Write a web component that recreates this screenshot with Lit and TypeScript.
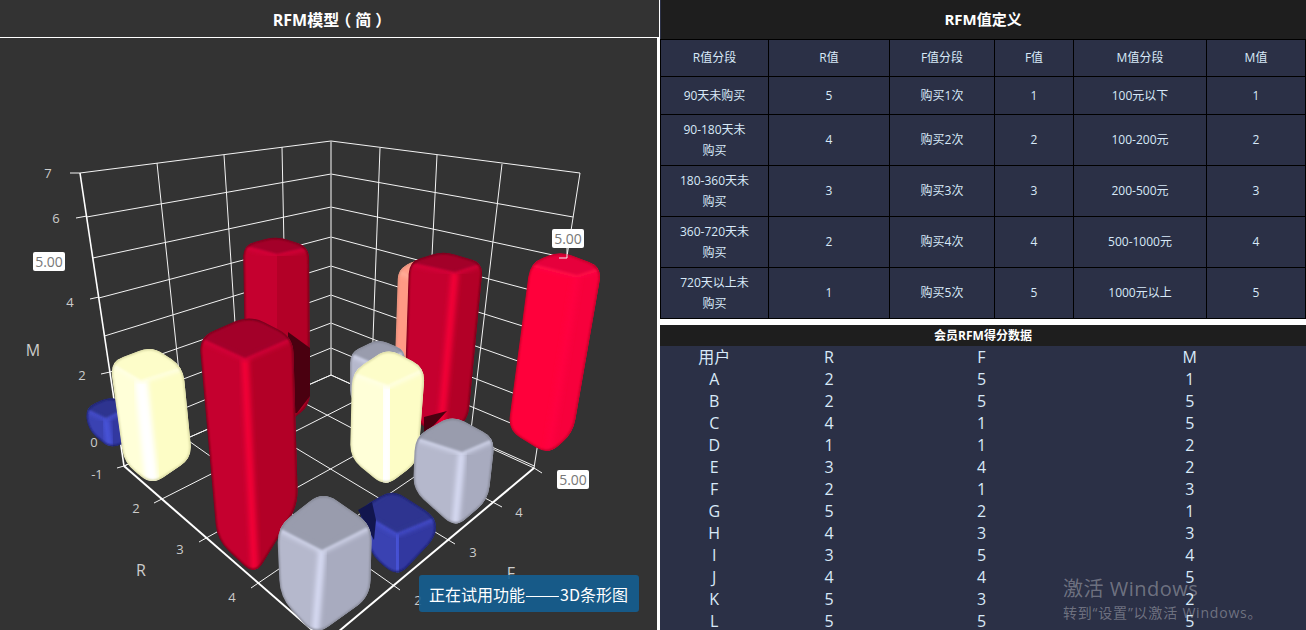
import { LitElement, html, css, svg } from "lit";
import { customElement } from "lit/decorators.js";

type P = [number, number];
interface Pal { top: string; left: string; right: string; hi: string; edge: string; bevel: string }
interface Bar { pal: Pal; L: P; T: P; R: P; F: P; BL: P; BF: P; BR: P; hw?: number; r?: number }

const RED: Pal = { top: "#a30029", left: "#c5002f", right: "#b30027", hi: "#f70039", edge: "#5f0014", bevel: "#d8003a" };
const BRIGHT: Pal = { top: "#e6003c", left: "#ff003b", right: "#f7003c", hi: "#ff0040", edge: "#b00024", bevel: "#ff0a48" };
const CREAM: Pal = { top: "#fdfdc9", left: "#ffffd8", right: "#fdfdc6", hi: "#ffffff", edge: "#d0d098", bevel: "#ffffe6" };
const GRAY: Pal = { top: "#999cad", left: "#b5b8cc", right: "#a8abbf", hi: "#d8dcf4", edge: "#7c7e8a", bevel: "#d4d8ee" };
const BLUE: Pal = { top: "#2e3490", left: "#3a42b2", right: "#3238a0", hi: "#4a55dc", edge: "#181b58", bevel: "#4650d0" };
const SALMON: Pal = { top: "#ff9f8a", left: "#ff9a85", right: "#f08c78", hi: "#ffb09c", edge: "#d88a76", bevel: "#ffb09c" };

const BARS: Bar[] = [
  { pal: BLUE, L: [85, 408], T: [110, 396], R: [132, 405], F: [106, 418], BL: [88, 430], BF: [110, 449], BR: [132, 440], r: 11 },
  { pal: RED, L: [243, 245], T: [277, 236], R: [309, 247], F: [277, 254], BL: [246, 420], BF: [277, 432], BR: [310, 405], r: 12 },
  { pal: SALMON, L: [398, 270], T: [415, 260], R: [440, 262], F: [420, 280], BL: [395, 360], BF: [415, 370], BR: [430, 360], r: 9 },
  { pal: RED, L: [409, 262], T: [443, 251], R: [483, 263], F: [455, 272], BL: [404, 410], BF: [440, 440], BR: [468, 420], r: 12 },
  { pal: GRAY, L: [350, 353], T: [378, 339], R: [405, 350], F: [378, 365], BL: [350, 400], BF: [378, 420], BR: [405, 400], r: 10 },
  { pal: BRIGHT, L: [530, 263], T: [560, 251], R: [602, 267], F: [577, 275], BL: [508, 430], BF: [548, 455], BR: [573, 433], r: 14 },
  { pal: CREAM, L: [110, 362], T: [152, 346], R: [183, 367], F: [141, 380], BL: [124, 463], BF: [152, 485], BR: [192, 458], hw: 13, r: 14 },
  { pal: RED, L: [199, 337], T: [250, 315], R: [293, 337], F: [245, 358], BL: [217, 540], BF: [255, 576], BR: [298, 505], r: 16 },
  { pal: CREAM, L: [352, 372], T: [388, 348], R: [425, 368], F: [388, 385], BL: [350, 458], BF: [385, 487], BR: [418, 462], hw: 13, r: 14 },
  { pal: GRAY, L: [415, 437], T: [452, 415], R: [495, 438], F: [462, 452], BL: [413, 490], BF: [455, 528], BR: [488, 500], r: 14 },
  { pal: BLUE, L: [358, 510], T: [392, 489], R: [436, 517], F: [397, 533], BL: [372, 557], BF: [398, 577], BR: [436, 537], r: 14 },
  { pal: GRAY, L: [277, 527], T: [323, 491], R: [372, 525], F: [322, 550], BL: [280, 597], BF: [315, 636], BR: [370, 597], r: 17 },
];

function rounded(pts: P[], r: number): string {
  const n = pts.length;
  let d = "";
  for (let i = 0; i < n; i++) {
    const p = pts[i], a = pts[(i + n - 1) % n], b = pts[(i + 1) % n];
    const la = Math.hypot(a[0] - p[0], a[1] - p[1]), lb = Math.hypot(b[0] - p[0], b[1] - p[1]);
    const ra = Math.min(r, la / 2), rb = Math.min(r, lb / 2);
    const s: P = [p[0] + (a[0] - p[0]) * ra / la, p[1] + (a[1] - p[1]) * ra / la];
    const e: P = [p[0] + (b[0] - p[0]) * rb / lb, p[1] + (b[1] - p[1]) * rb / lb];
    d += `${i ? "L" : "M"}${s[0].toFixed(1)} ${s[1].toFixed(1)}Q${p[0]} ${p[1]} ${e[0].toFixed(1)} ${e[1].toFixed(1)}`;
  }
  return d + "Z";
}
const poly = (pts: P[]) => pts.map((p) => p.join(",")).join(" ");
const line = (a: P, b: P, cls = "g") => svg`<line class=${cls} x1=${a[0]} y1=${a[1]} x2=${b[0]} y2=${b[1]}></line>`;

const LEVELS = [173, 217, 258, 298, 336, 372, 405, 435, 466];
const BACK = [141, 174, 207, 237, 266, 295, 323, 348, 375];
const lx = (y: number) => 80 + (44 * (y - 173)) / 293;
const rx = (y: number) => 580 - (46 * (y - 173)) / 295;

function grid() {
  const out: unknown[] = [];
  LEVELS.forEach((y, i) => {
    out.push(line([lx(y), y], [331, BACK[i]]));
    out.push(line([331, BACK[i]], [rx(y), y]));
  });
  const leftV: [P, P][] = [[[157, 163], [186, 439]], [[224, 155], [241, 415]], [[282, 147], [287, 394]]];
  const rightV: [P, P][] = [[[380, 148], [371, 393]], [[437, 155], [424, 417]], [[502, 164], [470, 439]]];
  [...leftV, ...rightV].forEach(([a, b]) => out.push(line(a, b)));
  out.push(line([331, 141], [331, 375], "g back"));
  out.push(line([580, 173], [534, 468]));
  out.push(line([124, 466], [331, 375]));
  out.push(line([331, 375], [534, 468]));
  const rLines: [P, P][] = [[[154, 503], [371, 393]], [[199, 542], [424, 417]], [[251, 588], [470, 439]]];
  const fLines: [P, P][] = [[[186, 439], [400, 590]], [[241, 415], [455, 544]], [[287, 394], [502, 507]]];
  [...rLines, ...fLines].forEach(([a, b]) => out.push(line(a, b)));
  out.push(line([70, 173], [80, 173]));
  out.push(line([76, 218], [87, 216]));
  out.push(line([90, 299], [99, 297]));
  out.push(line([101, 374], [110, 372]));
  out.push(line([117, 468], [124, 466]));
  out.push(line([534, 468], [542, 473]));
  out.push(line([80, 173], [124, 466], "a thin"));
  out.push(line([124, 466], [326, 642], "a"));
  out.push(line([534, 468], [326, 642], "a"));
  return out;
}

function bar(b: Bar, i: number) {
  const sil: P[] = [b.L, b.T, b.R, b.BR, b.BF, b.BL];
  const d = rounded(sil, b.r ?? 10);
  const inset = (p: P, k: number): P => {
    const cx = (b.L[0] + b.T[0] + b.R[0] + b.F[0]) / 4, cy = (b.L[1] + b.T[1] + b.R[1] + b.F[1]) / 4;
    return [p[0] + (cx - p[0]) * k, p[1] + (cy - p[1]) * k];
  };
  const id = `c${i}`;
  const top: P[] = [inset(b.L, 0.3), inset(b.T, 0.2), inset(b.R, 0.3), inset(b.F, 0.25)];
  return svg`
    <clipPath id=${id}><path d=${d}></path></clipPath>
    <g clip-path=${`url(#${id})`}>
      <path d=${d} fill=${b.pal.left}></path>
      <polygon points=${poly([b.F, b.R, [b.R[0] + 8, b.R[1]], [b.BR[0] + 8, b.BR[1]], b.BR, b.BF])} fill=${b.pal.right}></polygon>
      <line x1=${b.F[0]} y1=${b.F[1]} x2=${b.BF[0]} y2=${b.BF[1]} stroke=${b.pal.hi} stroke-width=${b.hw ?? 7} filter="url(#b2)"></line>
      <polygon points=${poly([b.L, b.F, b.R])} fill="none" stroke=${b.pal.bevel} stroke-width="6" filter="url(#b2)"></polygon>
      <polygon points=${poly([b.L, b.T, b.R, b.F])} fill=${b.pal.top} filter="url(#b1)"></polygon>
      <polygon points=${poly(top)} fill=${b.pal.top}></polygon>
      <path d=${d} fill="none" stroke=${b.pal.edge} stroke-width="2" filter="url(#b1)"></path>
    </g>`;
}

const chartLabels: [number, number, string, string][] = [
  [48, 178, "7", "t"], [56, 223, "6", "t"], [70, 307, "4", "t"], [82, 380, "2", "t"],
  [94, 447, "0", "t"], [97, 479, "-1", "t"], [136, 513, "2", "t"], [180, 554, "3", "t"], [232, 602, "4", "t"],
  [418, 605, "2", "t"], [473, 557, "3", "t"], [519, 517, "4", "t"],
  [33, 356, "M", "n"], [141, 576, "R", "n"], [511, 579, "F", "n"],
];
const valueBoxes: [number, number][] = [[33, 252], [552, 229], [557, 470]];

const DEF_ROWS = [
  ["90天未购买", "5", "购买1次", "1", "100元以下", "1"],
  ["90-180天未购买", "4", "购买2次", "2", "100-200元", "2"],
  ["180-360天未购买", "3", "购买3次", "3", "200-500元", "3"],
  ["360-720天未购买", "2", "购买4次", "4", "500-1000元", "4"],
  ["720天以上未购买", "1", "购买5次", "5", "1000元以上", "5"],
];
const SCORE_ROWS = [
  ["用户", "R", "F", "M"], ["A", "2", "5", "1"], ["B", "2", "5", "5"], ["C", "4", "1", "5"], ["D", "1", "1", "2"],
  ["E", "3", "4", "2"], ["F", "2", "1", "3"], ["G", "5", "2", "1"], ["H", "4", "3", "3"], ["I", "3", "5", "4"],
  ["J", "4", "4", "5"], ["K", "5", "3", "2"], ["L", "5", "5", "5"],
];

@customElement("app-root")
export class AppRoot extends LitElement {
  static styles = css`
    :host {
      display: block;
      width: 1306px;
      height: 630px;
      overflow: hidden;
      position: relative;
      background: #fff;
      font-family: "Open Sans", "Noto Sans CJK SC", sans-serif;
    }
    .page { display: grid; grid-template-columns: 660px 646px; height: 630px; }
    .left { display: flex; flex-direction: column; height: 630px; position: relative; overflow: hidden; }
    .left-head {
      width: 659px; height: 37px; flex: none; background: #333; color: #fff;
      font-size: 16px; font-weight: 700; display: flex; align-items: center; justify-content: center;
      box-sizing: border-box; padding-left: 1px; white-space: pre;
    }
    .pl { display: inline-block; transform: translateX(-4px); }
    .pr { display: inline-block; transform: translateX(4px); }
    .rule { height: 1px; width: 660px; background: #fff; flex: none; }
    .chart { width: 657px; height: 592px; background: #333; flex: none; }
    .chart svg { display: block; }
    .g { stroke: #f4f4f4; stroke-width: 1; }
    .back { stroke: #bbb; stroke-width: 1.5; }
    .a { stroke: #fff; stroke-width: 2; }
    .thin { stroke-width: 1.6; }
    .t { fill: #ccc; font-size: 13px; text-anchor: middle; }
    .n { fill: #ccc; font-size: 16px; text-anchor: middle; }
    .box { fill: #fff; }
    .v { fill: #777; font-size: 14px; text-anchor: middle; }
    .tip {
      position: absolute; left: 419px; top: 575px; width: 220px; height: 37px; box-sizing: border-box;
      background: rgba(20, 94, 145, 0.9); border-radius: 3px; color: #fff; font-size: 16px;
      font-family: "Noto Sans CJK SC", sans-serif;
      display: flex; align-items: center; padding-left: 10px; white-space: nowrap;
    }
    .dash { display: inline-block; width: 35px; transform: scaleX(1.3); transform-origin: left center; }
    .right { display: flex; flex-direction: column; height: 630px; overflow: hidden; }
    table { border-collapse: collapse; table-layout: fixed; width: 645px; flex: none; background: #2b3046; color: #d8e9f8; font-size: 12px; }
    .cap {
      background: #1e1e1e; color: #fff; font-weight: 700; font-size: 15px; height: 39px;
      text-align: center; padding: 0; border: 0; border-bottom: 1px solid #000;
    }
    td { border: 1px solid #000; text-align: center; padding: 0 17px; line-height: 21px; box-sizing: border-box; }
    tr.h td { height: 37px; }
    tr.one td { height: 38px; }
    tr.two td { height: 51px; }
    .scores { margin-top: 6px; flex: 1; background: #2b3046; color: #d8e9f8; overflow: hidden; }
    .scap { height: 21px; background: #1e1e1e; color: #fff; font-weight: 700; font-size: 12px; display: flex; align-items: center; justify-content: center; }
    .srow { display: grid; grid-template-columns: 108.5px 121px 184px 232.5px; height: 22px; line-height: 22px; font-size: 16px; text-align: center; }
    .wm { position: absolute; left: 1063px; top: 576px; color: rgba(255, 255, 255, 0.33); pointer-events: none; white-space: nowrap; }
    .wm1 { font-size: 20px; line-height: 26px; letter-spacing: 0.5px; }
    .wm2 { font-size: 14px; line-height: 20px; margin-top: 1px; letter-spacing: 0.8px; }
  `;

  render() {
    const cols = ["108", "121", "105", "79", "133", "99"];
    return html`
      <div class="page">
        <div class="left">
          <div class="left-head"><span>RFM模型<span class="pl">（</span>简<span class="pr">）</span></span></div>
          <div class="rule"></div>
          <div class="chart">
            <svg width="657" height="592" viewBox="0 38 657 592">
              <defs>
                <filter id="b1" x="-20%" y="-20%" width="140%" height="140%"><feGaussianBlur stdDeviation="1"></feGaussianBlur></filter>
                <filter id="b2" x="-60%" y="-20%" width="220%" height="140%"><feGaussianBlur stdDeviation="2.4"></feGaussianBlur></filter>
              </defs>
              ${grid()}
              ${BARS.slice(0, 2).map((b, i) => bar(b, i))}
              <polygon points="288,332 310,348 310,396 297,413 288,414" fill="#4a0010"></polygon>
              ${BARS.slice(2, 9).map((b, i) => bar(b, i + 2))}
              <polygon points="424,417 447,411 434,425 424,433" fill="#4a0010"></polygon>
              ${bar(BARS[9], 9)}
              ${bar(BARS[10], 10)}
              <polygon points="358,510 372,502 376,520 374,540" fill="#12164e"></polygon>
              ${bar(BARS[11], 11)}
              ${line([567, 248], [567, 258])}
              ${line([559, 258], [567, 258])}
              ${chartLabels.map(([x, y, s, c]) => svg`<text class=${c} x=${x} y=${y}>${s}</text>`)}
              ${valueBoxes.map(([x, y]) => svg`
                <rect class="box" x=${x} y=${y} width="32" height="19" rx="2"></rect>
                <text class="v" x=${x + 16} y=${y + 15}>5.00</text>`)}
            </svg>
          </div>
          <div class="tip"><span>正在试用功能<span class="dash">——</span>3D条形图</span></div>
        </div>
        <div class="right">
          <table>
            <colgroup>${cols.map((w) => html`<col style="width:${w}px" />`)}</colgroup>
            <tr><td class="cap" colspan="6">RFM值定义</td></tr>
            <tr class="h">${["R值分段", "R值", "F值分段", "F值", "M值分段", "M值"].map((t) => html`<td>${t}</td>`)}</tr>
            ${DEF_ROWS.map((r, i) => html`<tr class=${i === 0 ? "one" : "two"}>${r.map((t) => html`<td>${t}</td>`)}</tr>`)}
          </table>
          <div class="scores">
            <div class="scap">会员RFM得分数据</div>
            ${SCORE_ROWS.map((r) => html`<div class="srow">${r.map((t) => html`<span>${t}</span>`)}</div>`)}
          </div>
        </div>
      </div>
      <div class="wm"><div class="wm1">激活 Windows</div><div class="wm2">转到“设置”以激活 Windows。</div></div>
    `;
  }
}
